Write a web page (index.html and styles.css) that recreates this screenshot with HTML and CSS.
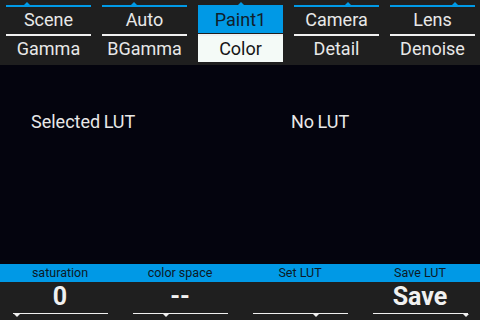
FILE: index.html
```html
<!DOCTYPE html>
<html lang="en">
<head>
    <meta charset="UTF-8">
    <title>Paint1 - Color</title>
    <link rel="stylesheet" href="styles.css">
</head>
<body>
    <div class="screen">
        <div class="tabs">
            <div class="tab">
                <div class="knob"><span class="knob-mark" style="left: 18px"></span></div>
                <div class="tab-top">Scene</div>
                <div class="tab-sep"></div>
                <div class="tab-bottom">Gamma</div>
            </div>
            <div class="tab">
                <div class="knob"><span class="knob-mark" style="left: 29px"></span></div>
                <div class="tab-top">Auto</div>
                <div class="tab-sep"></div>
                <div class="tab-bottom">BGamma</div>
            </div>
            <div class="tab active">
                <div class="knob"><span class="knob-mark" style="left: 40px"></span></div>
                <div class="tab-top">Paint1</div>
                <div class="tab-sep"></div>
                <div class="tab-bottom">Color</div>
            </div>
            <div class="tab">
                <div class="knob"><span class="knob-mark" style="left: 51px"></span></div>
                <div class="tab-top">Camera</div>
                <div class="tab-sep"></div>
                <div class="tab-bottom">Detail</div>
            </div>
            <div class="tab">
                <div class="knob"><span class="knob-mark" style="left: 62px"></span></div>
                <div class="tab-top">Lens</div>
                <div class="tab-sep"></div>
                <div class="tab-bottom">Denoise</div>
            </div>
        </div>

        <div class="content">
            <div class="info-row">
                <div class="info-label">Selected LUT</div>
                <div class="info-value">No LUT</div>
            </div>
        </div>

        <div class="params">
            <div class="param-name">saturation</div>
            <div class="param-name">color space</div>
            <div class="param-name">Set LUT</div>
            <div class="param-name">Save LUT</div>
        </div>

        <div class="values">
            <div class="value">
                <div class="value-text">0</div>
                <div class="slider"><span class="slider-mark" style="left: 1px"></span></div>
            </div>
            <div class="value">
                <div class="value-text">--</div>
                <div class="slider"><span class="slider-mark" style="left: 30px"></span></div>
            </div>
            <div class="value">
                <div class="value-text"></div>
                <div class="slider"><span class="slider-mark" style="left: 60px"></span></div>
            </div>
            <div class="value">
                <div class="value-text">Save</div>
                <div class="slider"><span class="slider-mark" style="left: 90px"></span></div>
            </div>
        </div>
    </div>
</body>
</html>
```

FILE: styles.css
```css
* { margin: 0; padding: 0; box-sizing: border-box; }

body {
    background: #04040e;
    font-family: Roboto, 'Liberation Sans', sans-serif;
    color: #e8e8e8;
}

.screen {
    width: 480px;
    height: 320px;
    display: flex;
    flex-direction: column;
    overflow: hidden;
}

/* top menu with the five encoder tabs */
.tabs {
    height: 65px;
    background: #1f1f1f;
    display: grid;
    grid-template-columns: repeat(5, 85px);
    column-gap: 11px;
    padding-left: 6px;
}

.knob {
    height: 7px;
    border-bottom: 2px solid #0099e6;
    position: relative;
}

.knob-mark {
    position: absolute;
    top: 2px;
    width: 0;
    height: 0;
    border-left: 3px solid transparent;
    border-right: 3px solid transparent;
    border-bottom: 3px solid #0099e6;
}

.tab-top,
.tab-bottom {
    height: 26px;
    line-height: 26px;
    font-size: 18px;
    text-align: center;
}

.tab-sep {
    height: 2px;
    margin-top: 1px;
    background: #f0f0f0;
}

.tab.active .tab-top {
    background: #0099e6;
    color: #10202c;
}

.tab.active .tab-bottom {
    background: #f4faf7;
    color: #161616;
}

/* main panel */
.content {
    flex: 1;
    background: #04040e;
    padding-top: 44px;
}

.info-row {
    display: flex;
    font-size: 18px;
    line-height: 26px;
}

.info-label {
    width: 291px;
    padding-left: 31px;
    word-spacing: -1px;
}

.info-value {
    word-spacing: -1px;
}

/* parameter bar */
.params {
    height: 18px;
    background: #0099e6;
    display: grid;
    grid-template-columns: repeat(4, 120px);
}

.param-name {
    font-size: 12.5px;
    line-height: 18px;
    text-align: center;
    color: #0c1a26;
}

.values {
    height: 38px;
    background: #1f1f1f;
    display: grid;
    grid-template-columns: repeat(4, 120px);
}

.value-text {
    height: 31px;
    line-height: 29px;
    font-size: 25px;
    font-weight: bold;
    text-align: center;
    color: #f0f0f0;
}

.slider {
    margin-left: 13px;
    width: 95px;
    height: 1px;
    background: #f0f0f0;
    position: relative;
}

.slider-mark {
    position: absolute;
    top: 1px;
    width: 0;
    height: 0;
    border-left: 3px solid transparent;
    border-right: 3px solid transparent;
    border-top: 3px solid #f0f0f0;
}
```
